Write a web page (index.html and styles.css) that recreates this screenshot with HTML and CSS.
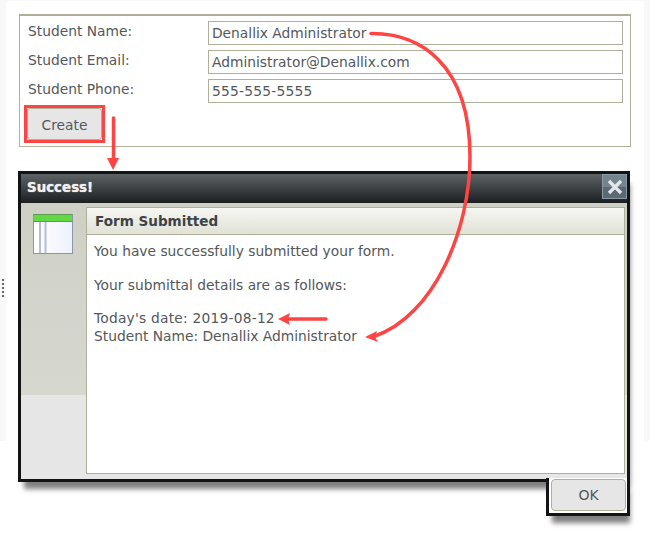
FILE: index.html
```html
<!DOCTYPE html>
<html lang="en">
<head>
    <meta charset="UTF-8" />
    <title>Student Form</title>
    <link rel="stylesheet" href="styles.css">
</head>
<body>
<div class="page">
    <div class="grip"></div>
    <div class="panel">
        <form class="student-form">
            <div class="form-labels">
                <label>Student Name:</label>
                <label>Student Email:</label>
                <label>Student Phone:</label>
                <button type="button" class="btn btn-create">Create</button>
            </div>
            <div class="form-fields">
                <div class="field">Denallix Administrator</div>
                <div class="field">Administrator@Denallix.com</div>
                <div class="field"><span class="digits">555-555-5555</span></div>
            </div>
        </form>
    </div>
</div>

<div class="dialog">
    <div class="dialog-main">
        <div class="dialog-title">
            <span class="dialog-name">Success!</span>
            <span class="close-btn">
                <svg width="18" height="18" viewBox="0 0 18 18">
                    <path d="M3 3 L15 15 M15 3 L3 15" stroke="#e4e8ea" stroke-width="3.2" fill="none"/>
                </svg>
            </span>
        </div>
        <div class="dialog-body">
            <div class="side">
                <svg class="side-icon" width="40" height="40" viewBox="0 0 40 40">
                    <defs>
                        <linearGradient id="pane">
                            <stop offset="0" stop-color="#ffffff"/>
                            <stop offset="1" stop-color="#eef1fc"/>
                        </linearGradient>
                    </defs>
                    <rect x="0.5" y="0.500" width="39" height="39" fill="url(#pane)" stroke="#8b95ad"/>
                    <rect x="1" y="1" width="38" height="6" fill="#62d845"/>
                    <path d="M0.5 0.5 H39.5 M0.5 7.5 H39.5" stroke="#5f9a4c"/>
                    <path d="M7 8 V39 M12.5 8 V39" stroke="#b4bdd4" stroke-width="2"/>
                </svg>
            </div>
            <div class="content">
                <h3 class="content-head">Form Submitted</h3>
                <div class="content-text">
                    <p>You have successfully submitted your form.</p>
                    <p>Your submittal details are as follows:</p>
                    <p><span class="digits">Today's date: 2019-08-12</span><br>Student Name: Denallix Administrator</p>
                </div>
            </div>
        </div>
    </div>
    <div class="dialog-foot">
        <button type="button" class="btn btn-ok">OK</button>
    </div>
</div>

<!-- red callouts drawn over the screenshot -->
<svg class="callouts" width="650" height="537" viewBox="0 0 650 537">
    <rect x="25.500" y="106.500" width="78" height="35" fill="none" stroke="#ff4444" stroke-width="3"/>
    <g fill="none" stroke="#ff4444" stroke-width="3.500" stroke-linecap="round">
        <path d="M113.500 118 V158"/>
        <path d="M326 319 H288"/>
        <path d="M371 33.500 C418 33 470 62 470 157 C470 230 434 316 374 336.500"/>
    </g>
    <g fill="#ff4444">
        <path d="M107 158 H119 L113 170 Z"/>
        <path d="M278 319 L290 313 L288 319 L290 325 Z"/>
        <path d="M365 337 L377 331 L375 337 L378 342 Z"/>
    </g>
</svg>
</body>
</html>
```
FILE: styles.css
```css
* {
  box-sizing: border-box;
}

body {
  margin: 0;
  background-color: #fff;
  font-family: "DejaVu Sans", Verdana, sans-serif;
  font-size: 13.8px;
  color: #53585b;
}

.page {
  position: relative;
  height: 441px;
  padding: 1px 6px 0;
  background-color: #f8f8f8;
}

.grip {
  position: absolute;
  left: 2px;
  top: 279px;
  width: 2px;
  height: 18px;
  border-left: 2px dotted #666;
}

.panel {
  height: 100%;
  padding: 13px 13px 0;
  background-color: #fff;
}

.student-form {
  display: flex;
  height: 133px;
  padding: 5px 7px 0 8px;
  border: 1px solid #b0b09a;
  border-top-width: 2px;
}

.form-labels {
  display: flex;
  flex-direction: column;
  width: 180px;
}

.form-labels label {
  height: 29px;
  line-height: 20px;
}

.form-fields {
  flex: 1;
  display: flex;
  flex-direction: column;
  gap: 5px;
}

.field {
  height: 24px;
  padding-left: 3px;
  line-height: 22px;
  background-color: #fff;
  border: 1px solid #b0b09a;
}

.digits {
  letter-spacing: 0.22px;
}

.btn {
  font-family: inherit;
  font-size: 13.8px;
  color: #53585b;
  background-color: #e6e6e6;
  border: 1px solid #b0b09a;
  border-radius: 3px;
}

.btn-create {
  width: 75px;
  height: 32px;
  margin-left: -1px;
  padding-top: 2px;
}

.dialog {
  position: absolute;
  left: 18px;
  top: 171px;
  width: 612px;
  display: flex;
  flex-direction: column;
}

.dialog-main {
  height: 311px;
  display: flex;
  flex-direction: column;
  border: 3px solid #111516;
  box-shadow: 3px 10px 5px -3px rgba(0, 0, 0, 0.5);
}

.dialog-title {
  height: 29px;
  flex: none;
  display: flex;
  justify-content: space-between;
  padding: 0 0 0 6px;
  line-height: 27px;
  color: #f0f0f0;
  background: linear-gradient(#5e6366, #1b1f21);
}

.dialog-name {
  font-size: 13.4px;
  font-weight: bold;
  text-shadow: 0 0 1px #f0f0f0;
}

.close-btn {
  display: flex;
  align-items: center;
  justify-content: center;
  width: 25px;
  height: 25px;
  background: linear-gradient(#75858e 50%, #5a6a74 50%);
  border: 1px solid #8a9aa4;
}

.dialog-body {
  flex: 1;
  display: flex;
  min-height: 0;
  padding-bottom: 5px;
  background: linear-gradient(#cfd0c5, #d6d7cf 192px, #e6e6e6 192px);
}

.side {
  width: 65px;
  flex: none;
  padding: 11px 0 0 12px;
}

.side-icon {
  display: block;
}

.content {
  flex: 1;
  margin: 4px 2px 0 0;
  background-color: #fff;
  border: 1px solid #b0b09a;
}

.content-head {
  margin: 0;
  height: 27px;
  padding-left: 8px;
  line-height: 26px;
  font-size: 13.550px;
  color: #3d4346;
  background: linear-gradient(#f6f6f2, #e0e2d6);
  border-bottom: 1px solid #b0b09a;
}

.content-text {
  padding: 7px 7px 0;
  line-height: 18px;
}

.content-text p {
  margin: 0 0 15.500px;
}

.dialog-foot {
  align-self: flex-end;
  position: relative;
  width: 84px;
  height: 38px;
  margin-top: -4px;
  padding: 1px 1px 0 2px;
  background-color: #fff;
  border: 3px solid #111516;
  border-top: none;
  box-shadow: 3px 10px 5px -3px rgba(0, 0, 0, 0.5);
}

.btn-ok {
  display: block;
  width: 75px;
  height: 32px;
  font-size: 14px;
  border-radius: 4px;
}

.callouts {
  position: absolute;
  left: 0;
  top: 0;
}
```
